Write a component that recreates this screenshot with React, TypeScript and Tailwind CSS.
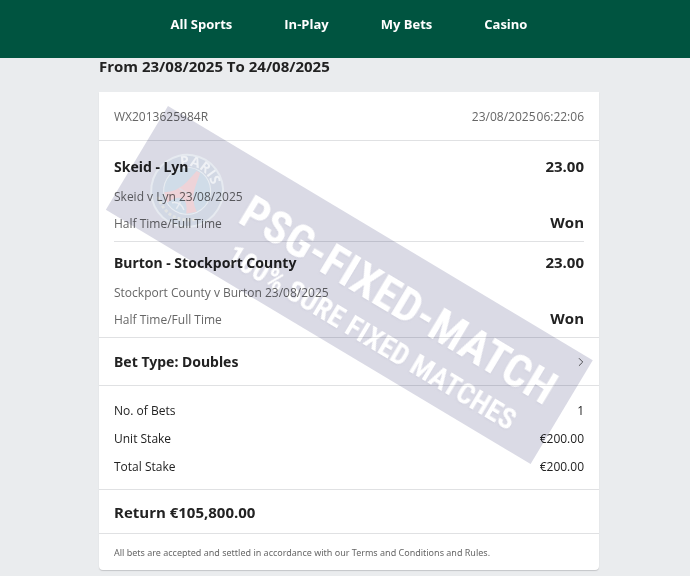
import { ChevronRight } from "lucide-react";

/* ---------------- Data ---------------- */

const navItems = ["All Sports", "In-Play", "My Bets", "Casino"];

const selections = [
    { title: "Skeid - Lyn", odds: "23.00", event: "Skeid v Lyn 23/08/2025", market: "Half Time/Full Time", result: "Won" },
    { title: "Burton - Stockport County", odds: "23.00", event: "Stockport County v Burton 23/08/2025", market: "Half Time/Full Time", result: "Won" },
];

const stakes = [
    { label: "No. of Bets", value: "1" },
    { label: "Unit Stake", value: "€200.00" },
    { label: "Total Stake", value: "€200.00" },
];

/* ---------------- Watermark ---------------- */

function Watermark() {
    return (
        <svg
            viewBox="0 0 500 478"
            className="pointer-events-none absolute inset-x-0 top-0 w-full overflow-visible mix-blend-multiply"
            aria-hidden="true"
        >
            <g transform="translate(69 14) rotate(30.9)">
                <rect width="495" height="121" fill="#dadae5" />

                {/* Club crest */}
                <g transform="translate(60 63)">
                    <circle r="37" fill="#e6eaf0" />
                    <circle r="35" fill="#d2d8e4" />
                    <circle r="24" fill="#e9edf2" />
                    <circle r="23" fill="#d0dce8" />
                    <path d="M-2 -22 H2 L5 -7 Q8 6 19 13 L11 20 Q6 9 0 9 Q-6 9 -11 20 L-19 13 Q-8 6 -5 -7 Z" fill="#eed3d8" />
                    <path d="M-8 2 H8" stroke="#e4dde4" strokeWidth="1.5" />
                    <path d="M-7 18 Q0 12 7 18 M0 13 V21" stroke="#e9edf2" strokeWidth="1.5" fill="none" />
                    <path d="M-22 20 Q0 38 22 20" stroke="#e2e4e4" strokeWidth="3" strokeDasharray="3 2" fill="none" />
                    <path id="crest-arc" d="M-25 0 A25 25 0 0 1 25 0" fill="none" />
                    <text fontSize="14" className="fill-[#eff1f5] font-['Open_Sans',sans-serif] font-bold" textAnchor="middle">
                        <textPath href="#crest-arc" startOffset="50%">PARIS</textPath>
                    </text>
                </g>

                <g className="fill-white font-['Roboto_Condensed','Liberation_Sans_Narrow','Open_Sans',sans-serif] font-bold drop-shadow-[0_1px_1px_#d0d0dd]">
                    <text x="118" y="64" fontSize="46">PSG-FIXED-MATCH</text>
                    <text x="128" y="104" fontSize="29">100% SURE FIXED MATCHES</text>
                </g>
            </g>
        </svg>
    );
}

/* ---------------- Page ---------------- */

export default function App() {
    return (
        <div className="min-h-screen bg-[#eaecee] font-['Open_Sans','Noto_Sans',sans-serif] text-[#222]">
            <header className="h-[58px] bg-[#005440] pl-2">
                <nav className="flex h-[50px] items-center justify-center gap-[52px] text-[13px] font-bold text-white">
                    {navItems.map((item) => (
                        <a key={item} href="#">{item}</a>
                    ))}
                </nav>
            </header>

            <main className="pb-1 pl-2">
                <div className="mx-auto max-w-[500px]">
                    <h1 className="h-[34px] text-[15px] leading-4 font-bold">From 23/08/2025 To 24/08/2025</h1>

                    <div className="relative rounded-b-sm bg-white shadow-[0_1px_1px_#c4c6c8]">
                        {/* Reference */}
                        <div className="flex h-[49px] items-center justify-between border-b border-[#e0e1e3] px-[15px] pt-0.5 text-xs text-[#666]">
                            <span>WX2013625984R</span>
                            <span className="flex gap-px">
                                <span>23/08/2025</span>
                                <span>06:22:06</span>
                            </span>
                        </div>

                        {/* Selections */}
                        <div className="divide-y divide-[#e0e1e3] px-[15px] pt-[5px]">
                            {selections.map((s) => (
                                <div key={s.title} className="pt-[7px] pb-2">
                                    <div className="flex h-[26px] items-center justify-between font-bold">
                                        <h2 className="pt-px font-['Noto_Sans',sans-serif] text-sm">{s.title}</h2>
                                        <span className="text-[15px]">{s.odds}</span>
                                    </div>
                                    <p className="text-xs leading-9 text-[#666]">{s.event}</p>
                                    <div className="flex h-[18px] items-start justify-between">
                                        <span className="text-xs leading-[18px] text-[#666]">{s.market}</span>
                                        <span className="text-[15px] leading-[14px] font-bold">{s.result}</span>
                                    </div>
                                </div>
                            ))}
                        </div>

                        {/* Bet type */}
                        <button className="flex h-[49px] w-full items-center justify-between border-y border-[#e0e1e3] px-[15px] font-['Noto_Sans',sans-serif] text-sm font-bold">
                            Bet Type: Doubles
                            <ChevronRight className="-mr-1 size-3.5 text-[#444]" strokeWidth={1.5} />
                        </button>

                        {/* Stakes */}
                        <dl className="border-b border-[#e0e1e3] px-[15px] pt-[11px] pb-2 text-xs leading-7">
                            {stakes.map((s) => (
                                <div key={s.label} className="flex justify-between">
                                    <dt>{s.label}</dt>
                                    <dd>{s.value}</dd>
                                </div>
                            ))}
                        </dl>

                        <p className="border-b border-[#e0e1e3] px-[15px] pt-px text-[15px] leading-[42px] font-bold">Return €105,800.00</p>

                        <p className="px-[15px] pt-px font-['Noto_Sans',sans-serif] text-[9px] leading-[35px] text-[#666]">
                            All bets are accepted and settled in accordance with our Terms and Conditions and Rules.
                        </p>

                        <Watermark />
                    </div>
                </div>
            </main>
        </div>
    );
}
